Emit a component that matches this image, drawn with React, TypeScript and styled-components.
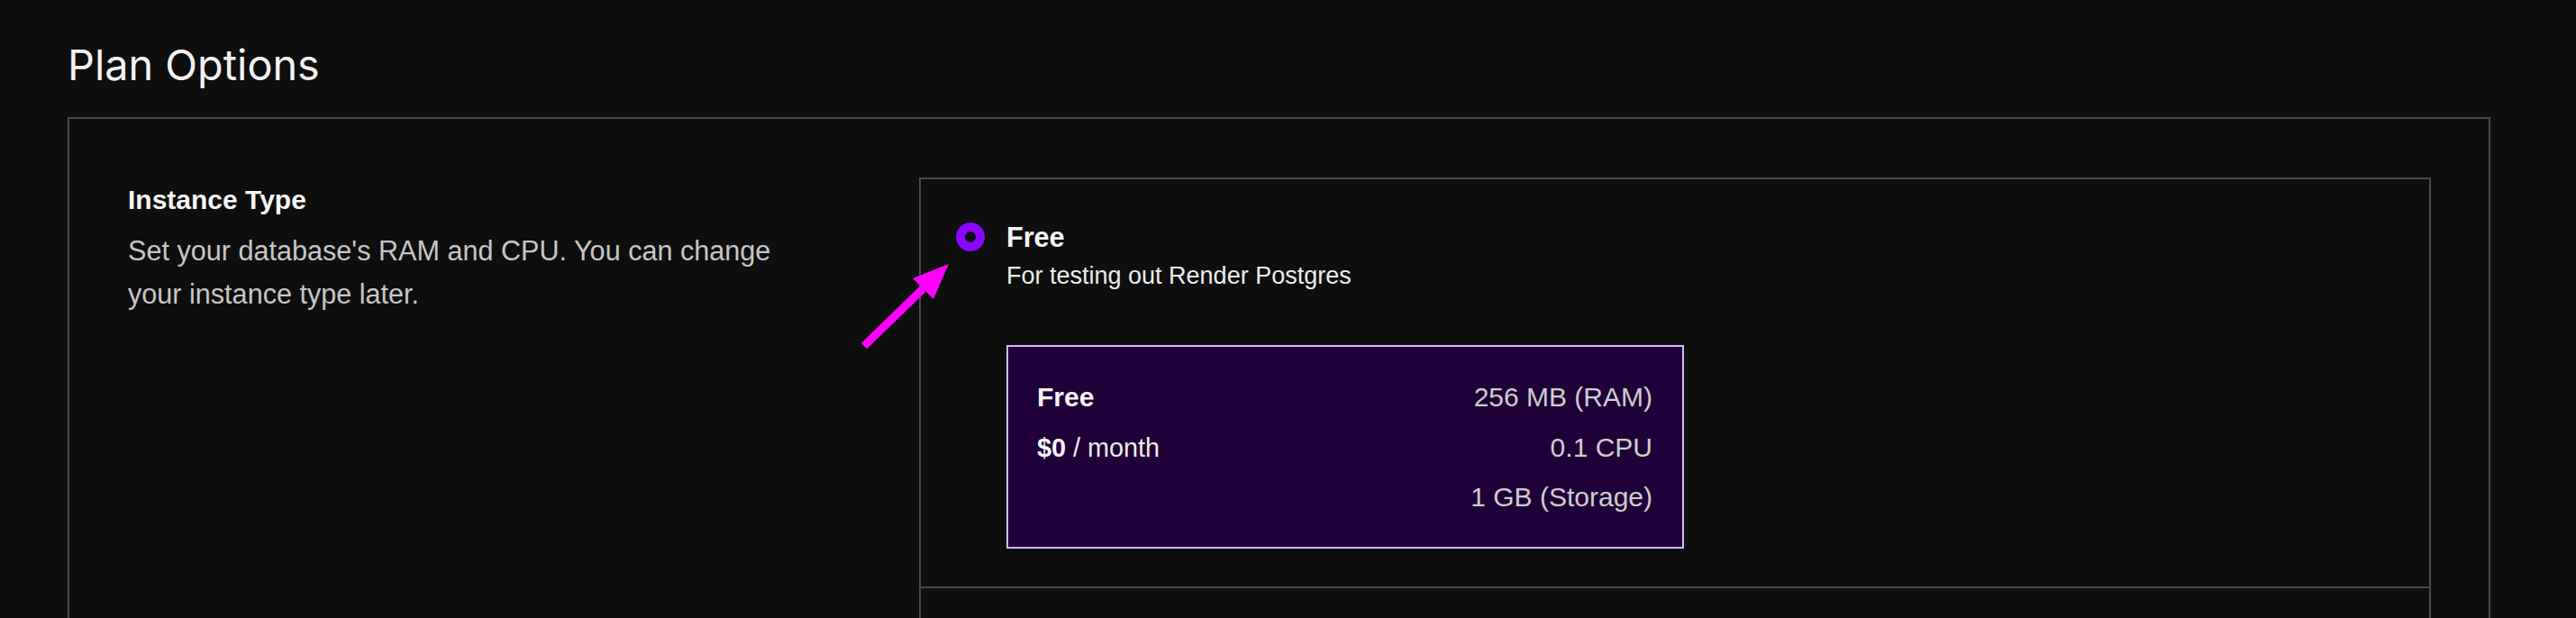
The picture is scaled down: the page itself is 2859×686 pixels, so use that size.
import React from "react";
import styled, { createGlobalStyle } from "styled-components";

const GlobalStyle = createGlobalStyle`
  html, body {
    margin: 0;
    padding: 0;
    background-color: #0e0e0e;
  }
  * {
    box-sizing: border-box;
  }
`;

const Page = styled.div`
  height: 100vh;
  overflow: hidden;
  padding: 44px 95px 0 75px;
  background-color: #0e0e0e;
  font-family: "Liberation Sans", Arial, sans-serif;
`;

const Title = styled.h1`
  margin: 0 0 29px;
  font-family: Inter, "Liberation Sans", sans-serif;
  font-size: 46.8px;
  line-height: 57px;
  font-weight: 400;
  color: #f2f2f2;
`;

const Section = styled.section`
  display: grid;
  grid-template-columns: 810px 1fr;
  column-gap: 68px;
  align-items: start;
  padding: 65px 64px 0 65px;
  border: 2px solid #4a4a4a;
  border-bottom: none;
  min-height: 700px;
`;

const Intro = styled.div`
  padding-top: 2px;
`;

const Heading = styled.h2`
  margin: 0;
  font-size: 30px;
  line-height: 46px;
  font-weight: 700;
  color: #f5f5f5;
`;

const Description = styled.p`
  margin: 9px 0 0;
  max-width: 740px;
  font-size: 30.6px;
  line-height: 48px;
  color: #c6c6c6;
`;

const Card = styled.div`
  min-height: 600px;
  border: 2px solid #4a4a4a;
  border-bottom: none;
`;

const Option = styled.label`
  position: relative;
  display: grid;
  grid-template-columns: 32px 1fr;
  column-gap: 24px;
  padding: 44px 40px 42px 39px;
  border-bottom: 2px solid #4a4a4a;
`;

const Radio = styled.span<{ $checked?: boolean }>`
  width: 32px;
  height: 32px;
  margin-top: 4px;
  border-radius: 50%;
  border: ${({ $checked }) => ($checked ? "10px solid #8a05ff" : "2px solid #6a6a6a")};
  background-color: #0e0e0e;
`;

const OptionBody = styled.div`
  display: flex;
  flex-direction: column;
`;

const OptionTitle = styled.div`
  font-size: 30.6px;
  line-height: 40px;
  font-weight: 700;
  color: #f5f5f5;
`;

const OptionSub = styled.div`
  margin-top: 4px;
  font-size: 27px;
  line-height: 38px;
  color: #ececec;
`;

const SpecBox = styled.div`
  display: flex;
  justify-content: space-between;
  width: 752px;
  margin-top: 58px;
  padding: 28px 33px 27px 32px;
  border: 2px solid #d4b8ff;
  background-color: #1f0038;
`;

const SpecColumn = styled.div<{ $align?: "left" | "right" }>`
  display: flex;
  flex-direction: column;
  text-align: ${({ $align }) => $align || "left"};
`;

const SpecLine = styled.div<{ $strong?: boolean; $muted?: boolean }>`
  height: 55.5px;
  line-height: 55.5px;
  font-size: 30px;
  font-weight: ${({ $strong }) => ($strong ? 700 : 400)};
  color: ${({ $muted }) => ($muted ? "#cdcdcd" : "#f5f5f5")};
  white-space: nowrap;
`;

const Price = styled.span`
  font-size: 28.8px;
  font-weight: 700;
  color: #f5f5f5;
`;

const Period = styled.span`
  font-size: 28.8px;
  font-weight: 400;
  color: #ececec;
`;

const Arrow = styled.svg`
  position: absolute;
  left: -70px;
  top: 88px;
  width: 110px;
  height: 105px;
  pointer-events: none;
`;

type Plan = {
  name: string;
  tagline: string;
  price: string;
  specs: string[];
};

const plans: Plan[] = [
  {
    name: "Free",
    tagline: "For testing out Render Postgres",
    price: "$0",
    specs: ["256 MB (RAM)", "0.1 CPU", "1 GB (Storage)"],
  },
];

const PointerArrow = () => (
  <Arrow viewBox="0 0 110 105">
    <polygon points="3.9,93.8 10.1,100.2 75.6,36.7 69.4,30.3" fill="#ff00ff" />
    <polygon points="101,6 61,22 84,45" fill="#ff00ff" />
  </Arrow>
);

const App: React.FC = () => {
  return (
    <>
      <GlobalStyle />
      <Page>
        <Title>Plan Options</Title>
        <Section>
          <Intro>
            <Heading>Instance Type</Heading>
            <Description>
              Set your database's RAM and CPU. You can change your instance type later.
            </Description>
          </Intro>
          <Card>
            {plans.map((plan, index) => (
              <Option key={plan.name}>
                {index === 0 && <PointerArrow />}
                <Radio $checked={index === 0} />
                <OptionBody>
                  <OptionTitle>{plan.name}</OptionTitle>
                  <OptionSub>{plan.tagline}</OptionSub>
                  <SpecBox>
                    <SpecColumn>
                      <SpecLine $strong>{plan.name}</SpecLine>
                      <SpecLine>
                        <Price>{plan.price}</Price>
                        <Period> / month</Period>
                      </SpecLine>
                    </SpecColumn>
                    <SpecColumn $align="right">
                      {plan.specs.map((spec) => (
                        <SpecLine key={spec} $muted>
                          {spec}
                        </SpecLine>
                      ))}
                    </SpecColumn>
                  </SpecBox>
                </OptionBody>
              </Option>
            ))}
          </Card>
        </Section>
      </Page>
    </>
  );
};

export default App;
